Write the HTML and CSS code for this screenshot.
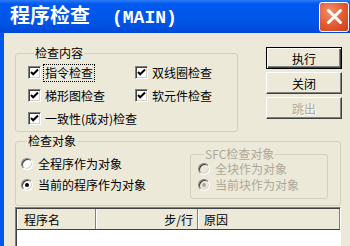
FILE: index.html
```html
<!DOCTYPE html>
<html lang="zh-CN">
<head>
    <meta charset="UTF-8">
    <title>程序检查 (MAIN)</title>
    <link rel="stylesheet" href="styles.css">
</head>
<body>
    <div class="window">
        <header class="titlebar">
            <span class="title">程序检查<span class="latin">(MAIN)</span></span>
            <button class="close">
                <svg width="17" height="17" viewBox="0 0 17 17">
                    <path d="M2.5 2.5 L14.5 14.5 M14.5 2.5 L2.5 14.5" stroke="#fff" stroke-width="3" stroke-linecap="round"/>
                </svg>
            </button>
        </header>

        <main class="frame">
            <div class="top-row">
                <fieldset class="group group-content">
                    <legend>检查内容</legend>
                    <div class="check-grid">
                        <label class="item"><span class="check"><svg width="11" height="11" viewBox="0 0 11 11"><path d="M2 5 L4.2 7.3 L9 2.5" stroke="#000" stroke-width="2" fill="none"/></svg></span><span class="text focus">指令检查</span></label>
                        <label class="item"><span class="check"><svg width="11" height="11" viewBox="0 0 11 11"><path d="M2 5 L4.2 7.3 L9 2.5" stroke="#000" stroke-width="2" fill="none"/></svg></span><span class="text">双线圈检查</span></label>
                        <label class="item"><span class="check"><svg width="11" height="11" viewBox="0 0 11 11"><path d="M2 5 L4.2 7.3 L9 2.5" stroke="#000" stroke-width="2" fill="none"/></svg></span><span class="text">梯形图检查</span></label>
                        <label class="item"><span class="check"><svg width="11" height="11" viewBox="0 0 11 11"><path d="M2 5 L4.2 7.3 L9 2.5" stroke="#000" stroke-width="2" fill="none"/></svg></span><span class="text">软元件检查</span></label>
                        <label class="item wide"><span class="check"><svg width="11" height="11" viewBox="0 0 11 11"><path d="M2 5 L4.2 7.3 L9 2.5" stroke="#000" stroke-width="2" fill="none"/></svg></span><span class="text">一致性(成对)检查</span></label>
                    </div>
                </fieldset>

                <div class="buttons">
                    <button class="btn btn-default">执行</button>
                    <button class="btn">关闭</button>
                    <button class="btn" disabled>跳出</button>
                </div>
            </div>

            <fieldset class="group group-target">
                <legend>检查对象</legend>
                <div class="target-row">
                    <div class="radio-list">
                        <label class="item"><span class="radio"></span><span class="text">全程序作为对象</span></label>
                        <label class="item"><span class="radio on"></span><span class="text">当前的程序作为对象</span></label>
                    </div>
                    <fieldset class="group group-sfc">
                        <legend>SFC检查对象</legend>
                        <label class="item"><span class="radio"></span><span class="text">全块作为对象</span></label>
                        <label class="item"><span class="radio on"></span><span class="text">当前块作为对象</span></label>
                    </fieldset>
                </div>
            </fieldset>

            <div class="list">
                <div class="list-head">
                    <div class="col col-name">程序名</div>
                    <div class="col col-step">步/行</div>
                    <div class="col col-reason">原因</div>
                </div>
                <div class="list-body"></div>
            </div>
        </main>
    </div>
</body>
</html>
```

FILE: styles.css
```css
body{
    margin: 0;
    width: 350px;
    height: 246px;
    overflow: hidden;
    font-family: "Noto Sans CJK SC", sans-serif;
    font-size: 12px;
    background: #ECE9D8;
}

.window{
    width: 350px;
    height: 246px;
    display: flex;
    flex-direction: column;
}

/* barra de titulo */
.titlebar{
    height: 33px;
    flex: none;
    box-sizing: border-box;
    display: flex;
    align-items: center;
    justify-content: space-between;
    padding: 0 1px 0 10px;
    background: linear-gradient(#2C7BFA, #0058EE 12%, #0055E5 70%, #0048D8);
}
.title{
    color: white;
    font-size: 20px;
    font-weight: bold;
    line-height: 20px;
}
.title .latin{
    font-family: "Liberation Mono", monospace;
    font-size: 18px;
    margin-left: 22px;
}
.close{
    width: 30px;
    height: 30px;
    padding: 0;
    border: 1px solid #fff;
    border-radius: 3px;
    background: radial-gradient(circle at 35% 30%, #F0906E, #E05A30 55%, #C8401C);
    display: flex;
    align-items: center;
    justify-content: center;
}

.frame{
    flex: 1;
    min-height: 0;
    display: flex;
    flex-direction: column;
    border-left: 4px solid #0055EA;
    padding: 14px 0 0 11px;
}

.top-row{
    display: flex;
}

.group{
    margin: 0;
    border: 1px solid #D0D0BF;
    border-radius: 3px;
    box-sizing: border-box;
}
.group legend{
    padding: 0 1px;
    margin-left: 6px;
    line-height: 12px;
    color: #000;
}

.group-content{
    width: 223px;
    height: 85px;
    padding: 2px 0 0 12px;
}
.check-grid{
    display: grid;
    grid-template-columns: 107px auto;
    grid-auto-rows: 23px;
}
.item{
    display: flex;
    align-items: center;
    gap: 4px;
    line-height: 14px;
    white-space: nowrap;
}
.wide{
    grid-column: span 2;
}
.focus{
    outline: 1px dotted #000;
    outline-offset: 1px;
}

.check{
    width: 13px;
    height: 13px;
    box-sizing: border-box;
    background: #fff;
    border: 1px solid;
    border-color: #808080 #fff #fff #808080;
    box-shadow: inset 1px 1px #404040, inset -1px -1px #D4D0C8;
    display: flex;
    align-items: center;
    justify-content: center;
}

.buttons{
    margin-left: 28px;
    display: flex;
    flex-direction: column;
    gap: 3px;
}
.btn{
    width: 76px;
    height: 22px;
    padding: 0;
    font-family: inherit;
    font-size: 12px;
    color: #000;
    background: #ECE9D8;
    border: 1px solid;
    border-color: #fff #404040 #404040 #fff;
    box-shadow: inset -1px -1px #808080;
}
.btn-default{
    border-color: #000;
    box-shadow: inset 1px 1px #fff, inset -1px -1px #404040, inset -2px -2px #808080;
}
.btn:disabled{
    color: #ACA899;
    text-shadow: 1px 1px #fff;
}

.group-target{
    width: 326px;
    height: 71px;
    flex: none;
    margin-top: 3px;
    padding: 0 0 0 5px;
}
.target-row{
    display: flex;
}
.radio-list{
    width: 169px;
    padding-top: 6px;
    display: flex;
    flex-direction: column;
}
.radio-list .item{
    height: 21px;
    gap: 5px;
}

.group-sfc{
    width: 138px;
    height: 51px;
    margin-top: 1px;
    padding: 1px 0 0 7px;
    color: #ACA899;
}
.group-sfc legend{
    color: #ACA899;
}
.group-sfc .item{
    height: 16px;
    line-height: 12px;
    gap: 5px;
}

.radio{
    width: 12px;
    height: 12px;
    box-sizing: border-box;
    border-radius: 50%;
    background: #fff;
    border: 1px solid;
    border-color: #808080 #fff #fff #808080;
    box-shadow: inset 1px 1px #404040, inset -1px -1px #D4D0C8;
    display: flex;
    align-items: center;
    justify-content: center;
}
.radio.on::after{
    content: "";
    width: 4px;
    height: 4px;
    border-radius: 50%;
    background: #000;
}
.group-sfc .radio{
    background: #ECE9D8;
}
.group-sfc .radio.on::after{
    background: #ACA899;
}

/* lista de resultados */
.list{
    width: 326px;
    flex: 1;
    min-height: 0;
    margin-top: 1px;
    box-sizing: border-box;
    border: 1px solid;
    border-color: #808080 #fff #fff #808080;
    border-bottom: none;
    box-shadow: inset 1px 1px #404040;
    padding: 1px 0 0 1px;
    background: #fff;
}
.list-head{
    display: flex;
    height: 20px;
    background: #ECE9D8;
    border-bottom: 1px solid #404040;
}
.col{
    box-sizing: border-box;
    height: 20px;
    line-height: 20px;
    padding-top: 1px;
    border-left: 1px solid #fff;
    border-right: 1px solid #808080;
}
.col-name{
    width: 79px;
    padding-left: 6px;
}
.col-step{
    width: 102px;
    text-align: right;
    padding-right: 4px;
}
.col-reason{
    flex: 1;
    padding-left: 5px;
}
```
